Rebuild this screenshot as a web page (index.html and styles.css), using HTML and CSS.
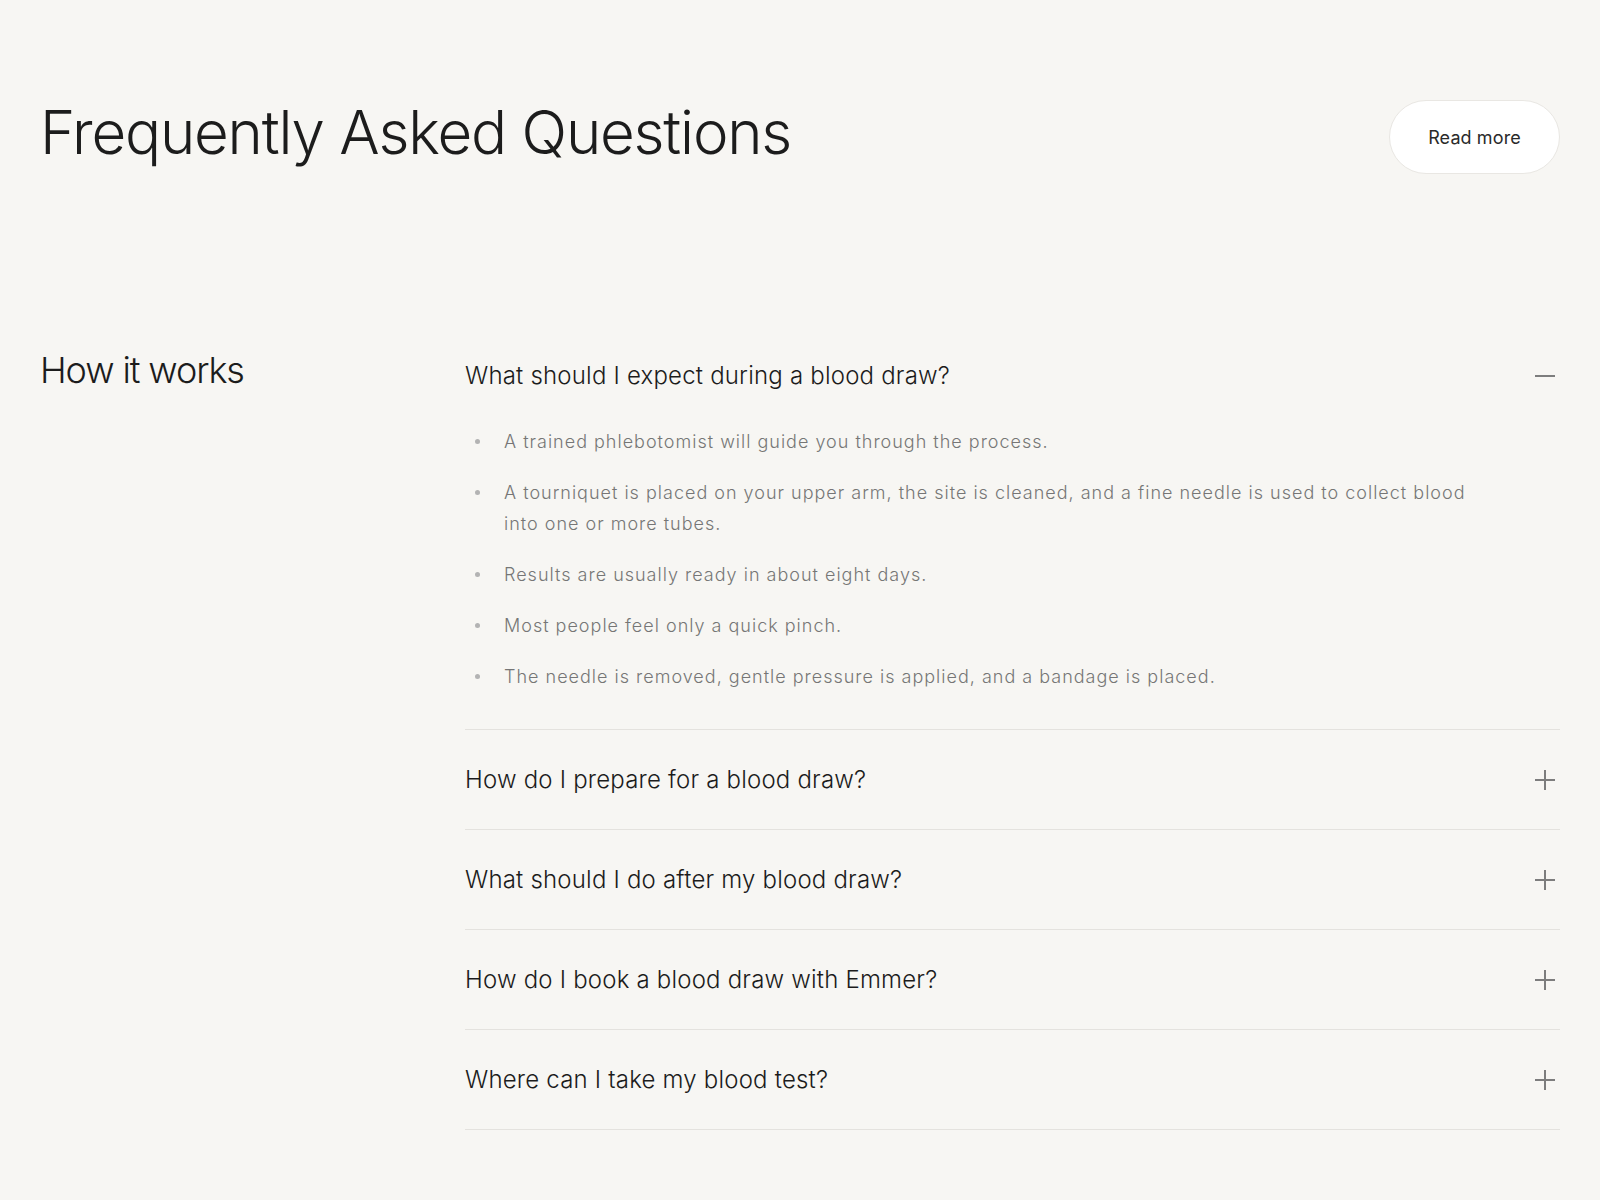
FILE: index.html
```html
<!DOCTYPE html>
<html lang="en">
<head>
<meta charset="utf-8">
<title>Frequently Asked Questions</title>
<link rel="stylesheet" href="styles.css">
</head>
<body>
<main class="page">
  <header class="faq-header">
    <h1 class="faq-title">Frequently Asked Questions</h1>
    <a class="btn-read" href="#">Read more</a>
  </header>

  <section class="faq-section">
    <h2 class="section-title">How it works</h2>
    <div class="faq-list">
      <div class="faq-item open">
        <button class="faq-q" type="button">
          <span class="q-text">What should I expect during a blood draw?</span>
          <svg class="q-icon" viewBox="0 0 20 20" width="20" height="20" aria-hidden="true"><path d="M0 10H20" /></svg>
        </button>
        <ul class="faq-a">
          <li>A trained phlebotomist will guide you through the process.</li>
          <li>A tourniquet is placed on your upper arm, the site is cleaned, and a fine needle is used to collect blood into one or more tubes.</li>
          <li>Results are usually ready in about eight days.</li>
          <li>Most people feel only a quick pinch.</li>
          <li>The needle is removed, gentle pressure is applied, and a bandage is placed.</li>
        </ul>
      </div>
      <div class="faq-item">
        <button class="faq-q" type="button">
          <span class="q-text">How do I prepare for a blood draw?</span>
          <svg class="q-icon" viewBox="0 0 20 20" width="20" height="20" aria-hidden="true"><path d="M0 10H20M10 0V20" /></svg>
        </button>
      </div>
      <div class="faq-item">
        <button class="faq-q" type="button">
          <span class="q-text">What should I do after my blood draw?</span>
          <svg class="q-icon" viewBox="0 0 20 20" width="20" height="20" aria-hidden="true"><path d="M0 10H20M10 0V20" /></svg>
        </button>
      </div>
      <div class="faq-item">
        <button class="faq-q" type="button">
          <span class="q-text">How do I book a blood draw with Emmer?</span>
          <svg class="q-icon" viewBox="0 0 20 20" width="20" height="20" aria-hidden="true"><path d="M0 10H20M10 0V20" /></svg>
        </button>
      </div>
      <div class="faq-item">
        <button class="faq-q" type="button">
          <span class="q-text">Where can I take my blood test?</span>
          <svg class="q-icon" viewBox="0 0 20 20" width="20" height="20" aria-hidden="true"><path d="M0 10H20M10 0V20" /></svg>
        </button>
      </div>
    </div>
  </section>
</main>
</body>
</html>
```

FILE: styles.css
```css
* { box-sizing: border-box; }

html, body {
  margin: 0;
  padding: 0;
  background: #f7f6f3;
}

body {
  font-family: Inter, "Noto Sans", "Liberation Sans", sans-serif;
  color: #1c1c1c;
  min-height: 1200px;
}

.page {
  padding: 96px 40px 60px;
}

.faq-header {
  display: flex;
  justify-content: space-between;
  align-items: flex-start;
}

.faq-title {
  margin: 0;
  font-size: 60px;
  line-height: 72px;
  font-weight: 300;
  letter-spacing: -1.2px;
  color: #1c1c1c;
}

.btn-read {
  margin-top: 4px;
  display: inline-flex;
  align-items: center;
  justify-content: center;
  width: 171px;
  height: 74px;
  border-radius: 37px;
  background: #ffffff;
  border: 1px solid #e9e7e3;
  color: #2a2a2a;
  font-size: 18px;
  font-weight: 400;
  letter-spacing: 0.1px;
  text-decoration: none;
  padding-top: 1px;
}

.faq-section {
  margin-top: 154px;
  display: grid;
  grid-template-columns: 425px 1fr;
}

.section-title {
  margin: 21px 0 0;
  font-size: 36px;
  line-height: 43px;
  font-weight: 300;
  letter-spacing: -1.1px;
  color: #1c1c1c;
}

.faq-list {
  display: flex;
  flex-direction: column;
}

.faq-item {
  border-bottom: 1px solid #e4e2de;
}

.faq-q {
  width: 100%;
  display: flex;
  align-items: center;
  justify-content: space-between;
  padding: 34px 0;
  margin: 0;
  border: 0;
  background: transparent;
  font-family: inherit;
  text-align: left;
  cursor: pointer;
  color: #1c1c1c;
}

.faq-item.open .faq-q {
  padding: 32px 0 35px;
}

.q-text {
  font-size: 24px;
  line-height: 31px;
  font-weight: 300;
  letter-spacing: 0.2px;
}

.q-icon {
  flex: none;
  margin-right: 5px;
  stroke: #7d7d7d;
  stroke-width: 2;
  fill: none;
}

.faq-a {
  list-style: none;
  margin: 0;
  padding: 0 90px 37px 0;
}

.faq-a li {
  display: flex;
  font-size: 18px;
  line-height: 31px;
  font-weight: 300;
  color: #767676;
  letter-spacing: 1px;
}

.faq-a li + li {
  margin-top: 20px;
}

.faq-a li::before {
  content: "";
  flex: none;
  width: 5px;
  height: 5px;
  border-radius: 50%;
  background: #b3b3b3;
  margin: 13px 24px 0 10px;
}
```
